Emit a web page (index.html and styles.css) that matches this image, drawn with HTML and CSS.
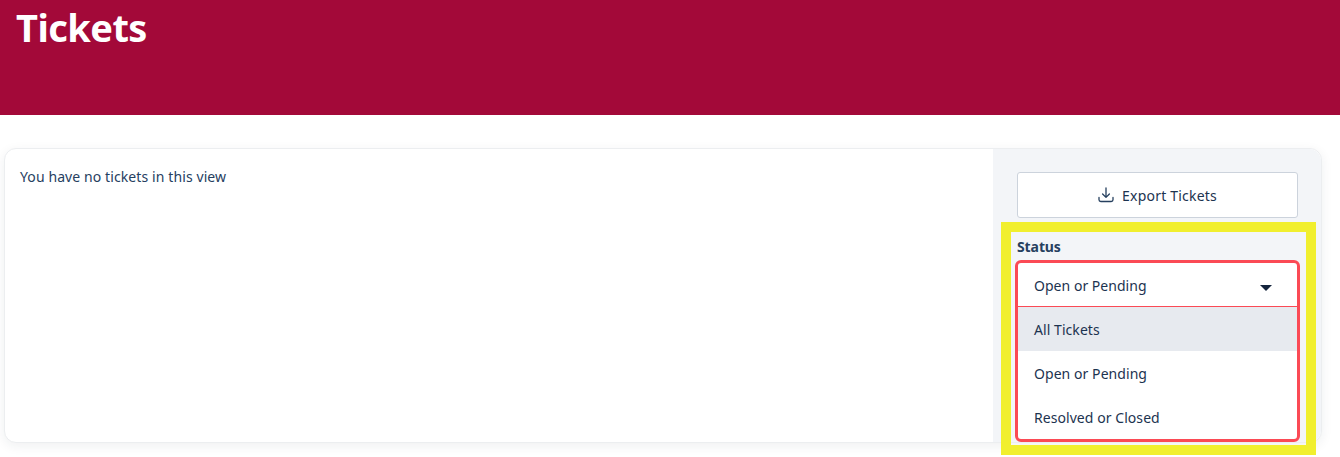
FILE: index.html
```html
<!DOCTYPE html>
<html lang="en">
<head>
<meta charset="utf-8">
<title>Tickets</title>
<link rel="stylesheet" href="styles.css">
</head>
<body>
<header class="banner"><h1 class="title">Tickets</h1></header>
<main class="content">
  <section class="card">
    <div class="list"><p class="empty">You have no tickets in this view</p></div>
    <aside class="side">
      <button class="export" type="button">
        <svg class="export-icon" width="16" height="16" viewBox="0 0 16 16" fill="none" stroke="currentColor" stroke-width="1.3" stroke-linecap="round" stroke-linejoin="round"><path d="M8 1v9.2M4.6 7 8 10.4 11.4 7"/><path d="M1 10.5v2.2c0 1 .7 1.8 1.8 1.8h10.4c1.1 0 1.8-.8 1.8-1.8v-2.2"/></svg>
        <span>Export Tickets</span>
      </button>
      <div class="highlight">
        <div class="label">Status</div>
        <div class="select">
          <div class="select-head"><span>Open or Pending</span><i class="caret"></i></div>
          <div class="option active">All Tickets</div>
          <div class="option">Open or Pending</div>
          <div class="option">Resolved or Closed</div>
        </div>
      </div>
    </aside>
  </section>
</main>
</body>
</html>
```
FILE: styles.css
```css
* { box-sizing: border-box; }
html, body { margin: 0; height: 457px; overflow: hidden; background: #fff; }
body { font-family: "Noto Sans", "Open Sans", sans-serif; font-size: 14px; color: #1c3350; }
.banner { height: 115px; background: #a30939; padding: 3px 16px 0; }
.title { margin: 0; font-size: 38px; line-height: 48px; font-weight: 700; color: #fff; letter-spacing: -0.55px; }
.content { padding: 33px 18px 0 4px; }
.card { display: flex; height: 295px; background: #fff; border: 1px solid #eceef0; border-radius: 12px; box-shadow: 0 3px 12px rgba(30, 40, 60, .07); }
.list { flex: 1; padding: 18px 15px; }
.empty { margin: 0; font-size: 14px; line-height: 20px; letter-spacing: 0.1px; color: #26405f; }
.side { width: 328px; flex: none; padding: 23px 4px 0 8px; background: #f3f5f8; border-radius: 0 12px 12px 0; }
.export { display: flex; align-items: center; justify-content: center; gap: 8px; width: 281px; height: 46px; margin-left: 16px; background: #fff; border: 1px solid #ccd3dc; border-radius: 3px; font: inherit; letter-spacing: 0.2px; color: #1c3350; }
.export-icon { color: #26405f; }
.highlight { margin-top: 4px; width: 315px; height: 233px; padding: 4px 4px 0; border: 10px solid #f1ef2e; }
.label { font-weight: 700; font-size: 14px; line-height: 20px; height: 24px; padding: 1px 0 0 2px; letter-spacing: -0.1px; color: #26405f; }
.select { width: 285px; height: 182px; border: 3px solid #fb4a55; border-radius: 6px; background: #fff; overflow: hidden; }
.select-head { display: flex; align-items: center; justify-content: space-between; height: 44px; padding: 1px 25px 0 16px; border-bottom: 1px solid #fb4a55; letter-spacing: 0.03px; }
.caret { width: 0; height: 0; margin-top: 6px; border-left: 6px solid transparent; border-right: 6px solid transparent; border-top: 6px solid #14253d; }
.option { height: 44px; line-height: 45px; padding-left: 16px; letter-spacing: 0.06px; }
.active { background: #e7eaef; }
```
